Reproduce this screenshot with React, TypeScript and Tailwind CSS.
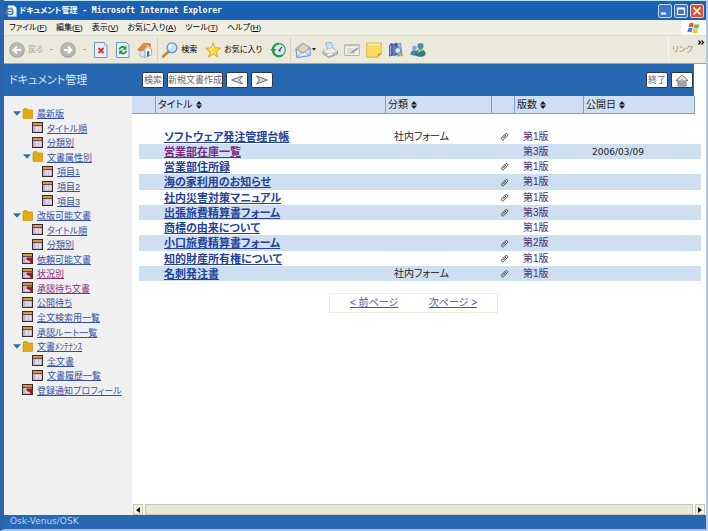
import React from "react";
import clsx from "clsx";

type TreeItem = {
  label: string;
  level: 0 | 1 | 2;
  kind: "folder" | "view" | "redView";
  visited?: boolean;
};

const tree: TreeItem[] = [
  { label: "最新版", level: 0, kind: "folder" },
  { label: "タイトル順", level: 1, kind: "view" },
  { label: "分類別", level: 1, kind: "view" },
  { label: "文書属性別", level: 1, kind: "folder" },
  { label: "項目1", level: 2, kind: "view" },
  { label: "項目2", level: 2, kind: "view" },
  { label: "項目3", level: 2, kind: "view" },
  { label: "改版可能文書", level: 0, kind: "folder" },
  { label: "タイトル順", level: 1, kind: "view" },
  { label: "分類別", level: 1, kind: "view" },
  { label: "依頼可能文書", level: 0, kind: "redView" },
  { label: "状況別", level: 0, kind: "redView", visited: true },
  { label: "承認待ち文書", level: 0, kind: "redView", visited: true },
  { label: "公開待ち", level: 0, kind: "view" },
  { label: "全文検索用一覧", level: 0, kind: "view" },
  { label: "承認ルート一覧", level: 0, kind: "view" },
  { label: "文書ﾒﾝﾃﾅﾝｽ", level: 0, kind: "folder" },
  { label: "全文書", level: 1, kind: "view" },
  { label: "文書履歴一覧", level: 1, kind: "view" },
  { label: "登録通知プロフィール", level: 0, kind: "redView" },
];

const documents = [
  { title: "ソフトウェア発注管理台帳", category: "社内フォーム", clip: true, version: "第1版", date: "" },
  { title: "営業部在庫一覧", category: "", clip: false, version: "第3版", date: "2006/03/09", visited: true },
  { title: "営業部住所録", category: "", clip: true, version: "第1版", date: "" },
  { title: "海の家利用のお知らせ", category: "", clip: true, version: "第1版", date: "" },
  { title: "社内災害対策マニュアル", category: "", clip: true, version: "第1版", date: "" },
  { title: "出張旅費精算書フォーム", category: "", clip: true, version: "第3版", date: "" },
  { title: "商標の由来について", category: "", clip: false, version: "第1版", date: "" },
  { title: "小口旅費精算書フォーム", category: "", clip: true, version: "第2版", date: "" },
  { title: "知的財産所有権について", category: "", clip: true, version: "第1版", date: "" },
  { title: "名刺発注書", category: "社内フォーム", clip: true, version: "第1版", date: "" },
];

const menus = [
  ["ファイル", "F"],
  ["編集", "E"],
  ["表示", "V"],
  ["お気に入り", "A"],
  ["ツール", "T"],
  ["ヘルプ", "H"],
];

const indent = ["pl-[9px]", "pl-[19px]", "pl-[29px]"];

/* ---------- icons ---------- */

function Icon({ children }: { children: React.ReactNode }) {
  return (
    <svg viewBox="0 0 16 16" className="size-4 shrink-0" aria-hidden="true">
      {children}
    </svg>
  );
}

function ArrowBall({ flip }: { flip?: boolean }) {
  return (
    <Icon>
      <circle cx="8" cy="8" r="7.8" fill="#a3a39e" />
      <circle cx="8" cy="7.6" r="6.8" fill="#bbbbb6" />
      <path
        d={flip ? "M4 8h7M8 4.6 11.4 8 8 11.4" : "M12 8H5M8 4.6 4.6 8 8 11.4"}
        fill="none"
        stroke="#fff"
        strokeWidth="2"
      />
    </Icon>
  );
}

function StopIcon() {
  return (
    <Icon>
      <path d="M1.5.5h10L14 3v12.500H1.500z" fill="#e6f0fb" stroke="#6c95cc" />
      <path d="M11.500.5v2.500H14" fill="#fff" stroke="#6c95cc" strokeWidth=".7" />
      <path d="m5.500 6 5 5M10.500 6l-5 5" stroke="#e0331c" strokeWidth="2" />
    </Icon>
  );
}

function RefreshIcon() {
  return (
    <Icon>
      <path d="M1.500.5h10L14 3v12.500H1.500z" fill="#e6f0fb" stroke="#6c95cc" />
      <path d="M4.500 7.500C5 4.500 8.500 4 10 6" fill="none" stroke="#22963a" strokeWidth="1.900" />
      <path d="M11.500 3.500v4.200H7.500z" fill="#22963a" />
      <path d="M11.200 8.800c-.5 3-4 3.500-5.500 1.500" fill="none" stroke="#22963a" strokeWidth="1.900" />
      <path d="M4.200 12.800V8.600h4z" fill="#22963a" />
    </Icon>
  );
}

function HomeIcon() {
  return (
    <Icon>
      <path d="M11 1.500h2.500v4H11z" fill="#a8482c" />
      <path d="M3 8v6l5 1.500V8z" fill="#dfe9f5" stroke="#7996bd" strokeWidth=".6" />
      <path d="M8 7.500 11 4l3.500 4v5L8 15.500z" fill="#f6faff" stroke="#7996bd" strokeWidth=".6" />
      <path d="M.5 8 6.500 1.200l5 .3L5.500 9z" fill="#e98a35" stroke="#b9651f" strokeWidth=".5" />
      <path d="m11.300 1.500 4.400 6.800-1.400.7L11 4.500 8 9z" fill="#f3b064" />
      <path d="M10 9.500l2.300-.6V14l-2.300.7z" fill="#4472b4" />
    </Icon>
  );
}

function SearchIcon() {
  return (
    <Icon>
      <path d="m6.500 9.500-5.300 5" stroke="#c98236" strokeWidth="2.600" strokeLinecap="round" />
      <circle cx="10" cy="5.800" r="4.900" fill="#c7e6fb" stroke="#5d8fca" strokeWidth="1.300" />
      <path d="M7.200 5.500C7.500 3.500 9 2.800 10.500 2.800" fill="none" stroke="#fff" strokeWidth="1.300" />
    </Icon>
  );
}

function StarIcon() {
  return (
    <Icon>
      <path
        d="m8.200.8 2 5 5.300.3-4.100 3.500 1.500 5.400-4.700-2.900L3.600 15 5 9.800.6 6.200l5.500-.3z"
        fill="#fbdc3c"
        stroke="#d09a1c"
        strokeWidth=".8"
      />
      <path d="M8.200 3.500 7 7l-3 .4" fill="none" stroke="#fff6b8" />
    </Icon>
  );
}

function HistoryIcon() {
  return (
    <Icon>
      <circle cx="9" cy="8" r="6.300" fill="#d7ecf5" stroke="#51917e" strokeWidth="1.200" />
      <path d="M9 1.700a6.300 6.300 0 1 0 3 11.900" fill="none" stroke="#2c9a45" strokeWidth="2.200" />
      <path d="M.2 7h6.300L3.300 11z" fill="#2c9a45" />
      <path d="M8.500 9 12 5M8.500 9H11" stroke="#395e91" strokeWidth="1.200" />
    </Icon>
  );
}

function MailIcon() {
  return (
    <Icon>
      <path d="M1 6.500 8 1l7 4.500v8L2 15.500z" fill="#b9d5f3" stroke="#6790c5" strokeWidth=".8" />
      <path d="M3.500 6 9 2l4.500 3.500-.5 4-9 1z" fill="#f7cfa0" stroke="#c7935c" strokeWidth=".5" />
      <path d="m1 7 7 4 7-5v7.500L2 15.500z" fill="#d8eafc" stroke="#6790c5" strokeWidth=".8" />
      <path d="m2 15 4.500-5M15 13.500 10 9.700" stroke="#6790c5" strokeWidth=".7" />
    </Icon>
  );
}

function PrinterIcon() {
  return (
    <Icon>
      <path d="m3.500 1 6-.6L11.500 7l-5.500 1z" fill="#cfe4f8" stroke="#7ba0cc" strokeWidth=".7" />
      <path d="m1 9 9-3 5.500 3v3L7 15.500l-6-3.500z" fill="#c4c5c3" stroke="#858785" strokeWidth=".7" />
      <path d="m1 9 6 3 8.500-3L10 6z" fill="#eeeeec" />
      <path d="m4 13 5-2 3 1-5.500 2.300z" fill="#fff" stroke="#999" strokeWidth=".4" />
    </Icon>
  );
}

function EditIcon() {
  return (
    <Icon>
      <path d="M.7 2.500h14.600v11H.7z" fill="#f3f3ee" stroke="#a2a29b" strokeWidth=".8" />
      <path d="M.7 2.500h14.600v2H.7z" fill="#c6c6be" />
      <path d="M3 7h6M3 9h5M3 11h8" stroke="#b3b3ac" strokeWidth=".8" />
      <path d="m7 11 1-2 5.500-3.500 1 1.300L9 10.500z" fill="#92928c" />
    </Icon>
  );
}

function NoteIcon() {
  return (
    <Icon>
      <path d="M.7 1h14.600v10.500l-3.600 3.700H.7z" fill="#fbdc62" stroke="#d6a832" strokeWidth=".8" />
      <path d="M15.300 11.500h-3.600v3.700z" fill="#d79c2d" />
      <path d="M2 2.500h12" stroke="#fff0ab" strokeWidth="1.500" />
    </Icon>
  );
}

function BooksIcon() {
  return (
    <Icon>
      <path d="M1 3.500 3 1l2.500.5v12L1 14.500z" fill="#5a63ad" />
      <path d="M5.500 2.500 7.500.7l2 .6V13l-4 1z" fill="#39529c" />
      <path d="m9.500 2 3-1 1.500 11-4 2.500z" fill="#a7b7dc" stroke="#4c5c9c" strokeWidth=".5" />
      <path d="M2.500 4v9M7 3.500v9" stroke="#a9b2e2" strokeWidth=".8" />
      <circle cx="9.800" cy="8.500" r="2.900" fill="#d2ecfb" stroke="#5878b0" strokeWidth=".9" />
      <path d="m11.700 10.700 3 3.500" stroke="#d39a35" strokeWidth="1.700" />
    </Icon>
  );
}

function MessengerIcon() {
  return (
    <Icon>
      <circle cx="4.500" cy="6" r="2.300" fill="#7aa9d0" />
      <path d="M.3 12.500c0-5 7-6 8 0-2 1.500-6 1.500-8 0z" fill="#4b84b8" />
      <circle cx="10.500" cy="4" r="3.100" fill="#4f8fb5" />
      <path d="M5 13c0-7.500 10.500-7.500 10.700-.5-2 3-8.500 3-10.700.5z" fill="#2f7f86" />
      <path d="M8 10.500c1-2.500 3.500-2.500 5-2" fill="none" stroke="#9dd494" strokeWidth="1.600" />
    </Icon>
  );
}

function BrowserPageIcon() {
  return (
    <svg viewBox="0 0 12 12" className="size-3" aria-hidden="true">
      <path d="M3 .5h6L11.500 3v8.500H3z" fill="#f4f8ff" stroke="#9bb7df" strokeWidth=".7" />
      <circle cx="5" cy="6.500" r="3" fill="none" stroke="#3477c9" strokeWidth="1.300" />
      <path d="M2.500 6.500h5" stroke="#3477c9" />
      <path d="M1 9c1-4 4-6.500 7-6" fill="none" stroke="#e5ad36" strokeWidth=".8" />
    </svg>
  );
}

function WindowsFlag() {
  return (
    <svg viewBox="0 0 14 12" className="h-3 w-[14px]" aria-hidden="true">
      <path d="M2.500 1.500c1.500-1 3-.8 4.300 0L5.800 5.500c-1.300-.8-2.800-.9-4.300 0z" fill="#e8542c" />
      <path d="M7.600 1.900c1.400.9 3 .8 4.900 0l-1.100 4c-1.600.9-3.300.9-4.800 0z" fill="#7cb83b" />
      <path d="M1.300 6.300c1.500-.9 3-.8 4.300 0l-1 4C3.300 9.500 1.800 9.400.3 10.300z" fill="#3d83d8" />
      <path d="M6.400 6.800c1.400.9 3.100.8 4.800 0l-1.100 4c-1.600.9-3.200.8-4.700 0z" fill="#f3c02f" />
    </svg>
  );
}

function FolderIcon() {
  return (
    <svg viewBox="0 0 11 11" className="size-[11px] shrink-0" aria-hidden="true">
      <path d="M1 2 2 .6h3L6 2h4.500v8.400H1z" fill="#e0ac12" stroke="#c4930f" strokeWidth=".7" />
    </svg>
  );
}

function ViewIcon({ red }: { red?: boolean }) {
  return (
    <svg viewBox="0 0 11 11" className="size-[11px] shrink-0" aria-hidden="true">
      <path d="M.6.6h9.800v9.800H.6z" fill="#f3f2fa" stroke="#3d2a30" strokeWidth="1.200" />
      <path d="M1 1h9v2H1z" fill="#dd9a2b" />
      <path d="M1 3.700h9" stroke="#3d2a30" strokeWidth="1" />
      <path d="M1.200 4.300h2.300v5.500H1.200z" fill="#b9b4d8" />
      <path d="M6.500 4.500v5.300M3.500 6h6.300M3.500 8h6.300" stroke="#b9b4cf" strokeWidth=".7" />
      {red && <path d="M4.500 4.500h5.900v5.900H8.500L7.800 8 4.500 7z" fill="#9c1d27" />}
    </svg>
  );
}

function TwistieIcon() {
  return (
    <svg viewBox="0 0 8 5" className="h-[5px] w-2" aria-hidden="true">
      <path d="M0 .3h8L4 4.800z" fill="#1f76b5" />
    </svg>
  );
}

function ClipIcon() {
  return (
    <svg viewBox="0 0 9 9" className="block size-[9px]" role="img" aria-label="添付">
      <path
        d="M3 6.300 6 3M4.200 7.200 7.400 3.700C8.400 2.300 6.800.7 5.300 2L1.800 5.600C.6 7.200 2.600 8.800 4.200 7.200z"
        fill="none"
        stroke="#4b4b40"
        strokeWidth="1"
      />
    </svg>
  );
}

function SortIcon() {
  return (
    <svg viewBox="0 0 6 8" className="h-2 w-[6px]" aria-hidden="true">
      <path d="M3 0l3 3.400H0zM3 8 0 4.600h6z" fill="#1c1c28" />
    </svg>
  );
}

/* ---------- page parts ---------- */

function TitleBar() {
  return (
    <div className="flex h-5 items-center justify-between border-t border-[#b9e6f5] bg-[#1a60b3] pr-[2px] pl-px">
      <div className="flex items-center gap-[2px]">
        <BrowserPageIcon />
        <h1 className="font-['DejaVu_Sans_Mono','Noto_Sans_CJK_JP',monospace] text-[8px] leading-3 font-bold text-white">
          ドキュメント管理 - Microsoft Internet Explorer
        </h1>
      </div>
      <div className="flex gap-[2px]">
        <button aria-label="最小化" className="size-[14px] rounded-[2px] border border-[#c3d8f3] bg-[#3d74cb]">
          <svg viewBox="0 0 12 12"><path d="M2 8.500h5" stroke="#fff" strokeWidth="2" /></svg>
        </button>
        <button aria-label="最大化" className="size-[14px] rounded-[2px] border border-[#c3d8f3] bg-[#3d74cb]">
          <svg viewBox="0 0 12 12"><path d="M2.500 3h7v6.500h-7zM2.500 4h7" fill="none" stroke="#fff" strokeWidth="1.200" /></svg>
        </button>
        <button aria-label="閉じる" className="size-[14px] rounded-[2px] border border-[#f0cfc5] bg-[#d9542f]">
          <svg viewBox="0 0 12 12"><path d="m2.500 2.500 7 7m0-7-7 7" stroke="#fff" strokeWidth="1.700" /></svg>
        </button>
      </div>
    </div>
  );
}

function MenuBar() {
  return (
    <div className="flex h-4 items-stretch justify-between border-b border-[#dddbcb] bg-[#efeee2]">
      <nav className="flex items-center gap-[9px] pl-[5px] text-[8px] leading-3 text-black">
        {menus.map(([label, key]) => (
          <button key={key}>
            {label}(<span className="underline">{key}</span>)
          </button>
        ))}
      </nav>
      <div className="flex w-[25px] items-center justify-center bg-white">
        <WindowsFlag />
      </div>
    </div>
  );
}

function Dash() {
  return (
    <span className="flex w-[5px] justify-center" aria-hidden="true">
      <span className="h-px w-[3px] bg-[#aaa99f]" />
    </span>
  );
}

function Separator() {
  return <div className="h-6 w-px bg-[#d3d1c0]" />;
}

function Toolbar() {
  return (
    <div className="flex h-7 items-center justify-between border-b border-[#a5a389] bg-[#ebe9da] text-[8px] leading-3 text-black">
      <div className="flex items-center gap-1 pl-[5px]">
        <div className="flex items-center gap-[6px]">
          <button className="flex items-center gap-[3px] text-[#a9a89c]"><ArrowBall />戻る</button>
          <Dash />
          <button aria-label="進む"><ArrowBall flip /></button>
          <Dash />
          <button aria-label="中止"><StopIcon /></button>
          <button aria-label="更新"><RefreshIcon /></button>
          <button aria-label="ホーム"><HomeIcon /></button>
        </div>
        <Separator />
        <div className="flex items-center gap-2">
          <button className="flex items-center gap-[3px]"><SearchIcon />検索</button>
          <button className="flex items-center gap-[3px]"><StarIcon />お気に入り</button>
          <button aria-label="履歴"><HistoryIcon /></button>
        </div>
        <Separator />
        <div className="flex items-center gap-[6px]">
          <button aria-label="メール" className="flex items-center gap-px">
            <MailIcon />
            <svg viewBox="0 0 4 3" className="h-[3px] w-1"><path d="M0 0h4L2 2.800z" fill="#222" /></svg>
          </button>
          <button aria-label="印刷"><PrinterIcon /></button>
          <button aria-label="編集"><EditIcon /></button>
          <button aria-label="メモ"><NoteIcon /></button>
          <button aria-label="リサーチ"><BooksIcon /></button>
          <button aria-label="メッセンジャー"><MessengerIcon /></button>
        </div>
      </div>
      <div className="flex h-full items-stretch border-l border-[#f7f6ee] pr-px">
        <span className="self-center px-[3px] text-[#8d8c80]">リンク</span>
        <svg viewBox="0 0 7 5" className="mt-1 ml-[2px] h-[5px] w-[7px]" aria-hidden="true">
          <path d="m.5.500 2 2-2 2m3-4 2 2-2 2" fill="none" stroke="#111" strokeWidth="1.300" />
        </svg>
      </div>
    </div>
  );
}

const appButton =
  "flex h-4 items-center justify-center rounded-[2px] border border-[#28384f] bg-white text-[9px] leading-3 text-[#666]";

function AppHeader() {
  return (
    <header className="mr-3 flex h-8 items-center bg-[#2867b2]">
      <h2 className="w-[138px] pl-[5px] text-[11px] leading-4 text-[#dce9fa]">ドキュメント管理</h2>
      <div className="flex flex-1 gap-[3px]">
        <button className={clsx(appButton, "w-[22px]")}>検索</button>
        <button className={clsx(appButton, "w-14")}>新規文書作成</button>
        <button className={clsx(appButton, "w-[22px]")} aria-label="前へ">
          <svg viewBox="0 0 14 10" className="h-[10px] w-[14px]">
            <path d="M12.500 1 1.500 5l11 4L9.500 5z" fill="#d5d5d5" stroke="#666" strokeWidth=".9" />
          </svg>
        </button>
        <button className={clsx(appButton, "w-[22px]")} aria-label="次へ">
          <svg viewBox="0 0 14 10" className="h-[10px] w-[14px]">
            <path d="m1.500 1 11 4-11 4 3-4z" fill="#d5d5d5" stroke="#666" strokeWidth=".9" />
          </svg>
        </button>
      </div>
      <div className="flex gap-[3px] pr-px">
        <button className={clsx(appButton, "w-[22px]")}>終了</button>
        <button className={clsx(appButton, "w-[22px]")} aria-label="ホーム">
          <svg viewBox="0 0 14 13" className="h-[13px] w-[14px]">
            <path d="M1 6.500 7 1l6 5.500H11V12H3V6.500z" fill="#e4e4e4" stroke="#666" strokeWidth=".9" />
            <path d="M5 6v6M7 5v7M9 6v6M3 8h8M3 10h8" stroke="#777" strokeWidth=".7" />
          </svg>
        </button>
      </div>
    </header>
  );
}

function Sidebar() {
  return (
    <aside className="w-32 shrink-0 bg-[#f0f0f0] pt-[10px]">
      <ul className="grid h-[291px] auto-rows-fr">
        {tree.map((item, i) => (
          <li key={i} className={clsx("flex items-center", indent[item.level])}>
            <span className="w-[9px]">{item.kind === "folder" && <TwistieIcon />}</span>
            {item.kind === "folder" ? <FolderIcon /> : <ViewIcon red={item.kind === "redView"} />}
            <a
              href="#"
              className={clsx(
                "pt-[2px] pl-1 text-[9px] leading-3 whitespace-nowrap underline",
                item.visited ? "text-[#8c2c84]" : "text-[#3550a8]",
              )}
            >
              {item.label}
            </a>
          </li>
        ))}
      </ul>
    </aside>
  );
}

function HeadCell({ children }: { children: string }) {
  return (
    <th scope="col" className="border-b border-l border-[#7e9ddb] bg-[#cfdef3] pl-[2px] text-left font-normal">
      <button className="flex items-center gap-[3px]">
        {children}
        <SortIcon />
      </button>
    </th>
  );
}

function DocumentTable() {
  return (
    <table className="w-full table-fixed border-separate border-spacing-0 text-[10px] leading-[14px] text-[#222]">
      <colgroup>
        <col className="w-[7px]" />
        <col className="w-4" />
        <col className="w-[230px]" />
        <col className="w-[106px]" />
        <col className="w-[23px]" />
        <col className="w-[69px]" />
        <col />
        <col className="w-[7px]" />
      </colgroup>
      <thead>
        <tr className="h-[18px]">
          <td colSpan={2} className="border-b border-[#7e9ddb] bg-[#cfdef3]" />
          <HeadCell>タイトル</HeadCell>
          <HeadCell>分類</HeadCell>
          <td className="border-b border-l border-[#7e9ddb] bg-[#cfdef3]" />
          <HeadCell>版数</HeadCell>
          <HeadCell>公開日</HeadCell>
          <td className="border-l border-[#7e9ddb]" />
        </tr>
        <tr className="h-[15px]"><td colSpan={8} /></tr>
      </thead>
      <tbody>
        {documents.map((doc, i) => {
          const stripe = i % 2 === 1 && "bg-[#cfdff2]";
          return (
            <tr key={doc.title} className={i % 4 === 3 ? "h-4" : "h-[15px]"}>
              <td />
              <td className={clsx(stripe)} />
              <td className={clsx("pl-[9px] text-[11px] font-bold", stripe)}>
                <a href="#" className={clsx("underline", doc.visited ? "text-[#7a2a80]" : "text-[#24429a]")}>
                  {doc.title}
                </a>
              </td>
              <td className={clsx("pl-[9px]", stripe)}>{doc.category}</td>
              <td className={clsx("pl-[9px]", stripe)}>{doc.clip && <ClipIcon />}</td>
              <td className={clsx("pl-[9px] text-[#4b2c6a]", stripe)}>{doc.version}</td>
              <td className={clsx("pl-[9px] font-['DejaVu_Sans',sans-serif] text-[9px]", stripe)}>{doc.date}</td>
              <td className={clsx(stripe)} />
            </tr>
          );
        })}
      </tbody>
    </table>
  );
}

function ScrollBar() {
  return (
    <div className="flex h-[11px] items-stretch gap-[2px] bg-[#f6f5ee] px-px">
      <button aria-label="左へスクロール" className="flex w-[10px] items-center justify-center border border-[#c9c7b5] bg-[#f1f0e4]">
        <svg viewBox="0 0 4 6" className="h-[6px] w-1"><path d="M4 0v6L0 3z" fill="#111" /></svg>
      </button>
      <div className="flex-1 border border-[#c9c7b5] bg-[#e9e7d6]" />
      <button aria-label="右へスクロール" className="flex w-[10px] items-center justify-center border border-[#c9c7b5] bg-[#f1f0e4]">
        <svg viewBox="0 0 4 6" className="h-[6px] w-1"><path d="M0 0v6l4-3z" fill="#111" /></svg>
      </button>
    </div>
  );
}

export default function App() {
  return (
    <div className="flex min-h-screen flex-col border-r-2 border-b-2 border-l-4 border-r-[#b4c8ea] border-b-[#a9c0e6] border-l-[#2b64a8] bg-white font-['Liberation_Sans','Noto_Sans_CJK_JP',sans-serif] [font-feature-settings:'palt']">
      <TitleBar />
      <MenuBar />
      <Toolbar />
      <AppHeader />
      <div className="flex flex-1">
        <Sidebar />
        <main className="flex min-w-0 flex-1 flex-col">
          <div className="flex-1 pr-[5px]">
            <DocumentTable />
            <nav className="mt-3 ml-[197px] flex h-5 w-[169px] items-center justify-between border border-[#f0ecdc] px-5 text-[10px] leading-[14px] text-[#4557b4]">
              <a href="#" className="underline">&lt; 前ページ</a>
              <a href="#" className="underline">次ページ &gt;</a>
            </nav>
          </div>
          <ScrollBar />
        </main>
      </div>
      <footer className="h-[14px] bg-[#2867b2] pl-[6px] font-['DejaVu_Sans',sans-serif] text-[9px] leading-3 text-[#bcd3f2]">
        Osk-Venus/OSK
      </footer>
    </div>
  );
}
